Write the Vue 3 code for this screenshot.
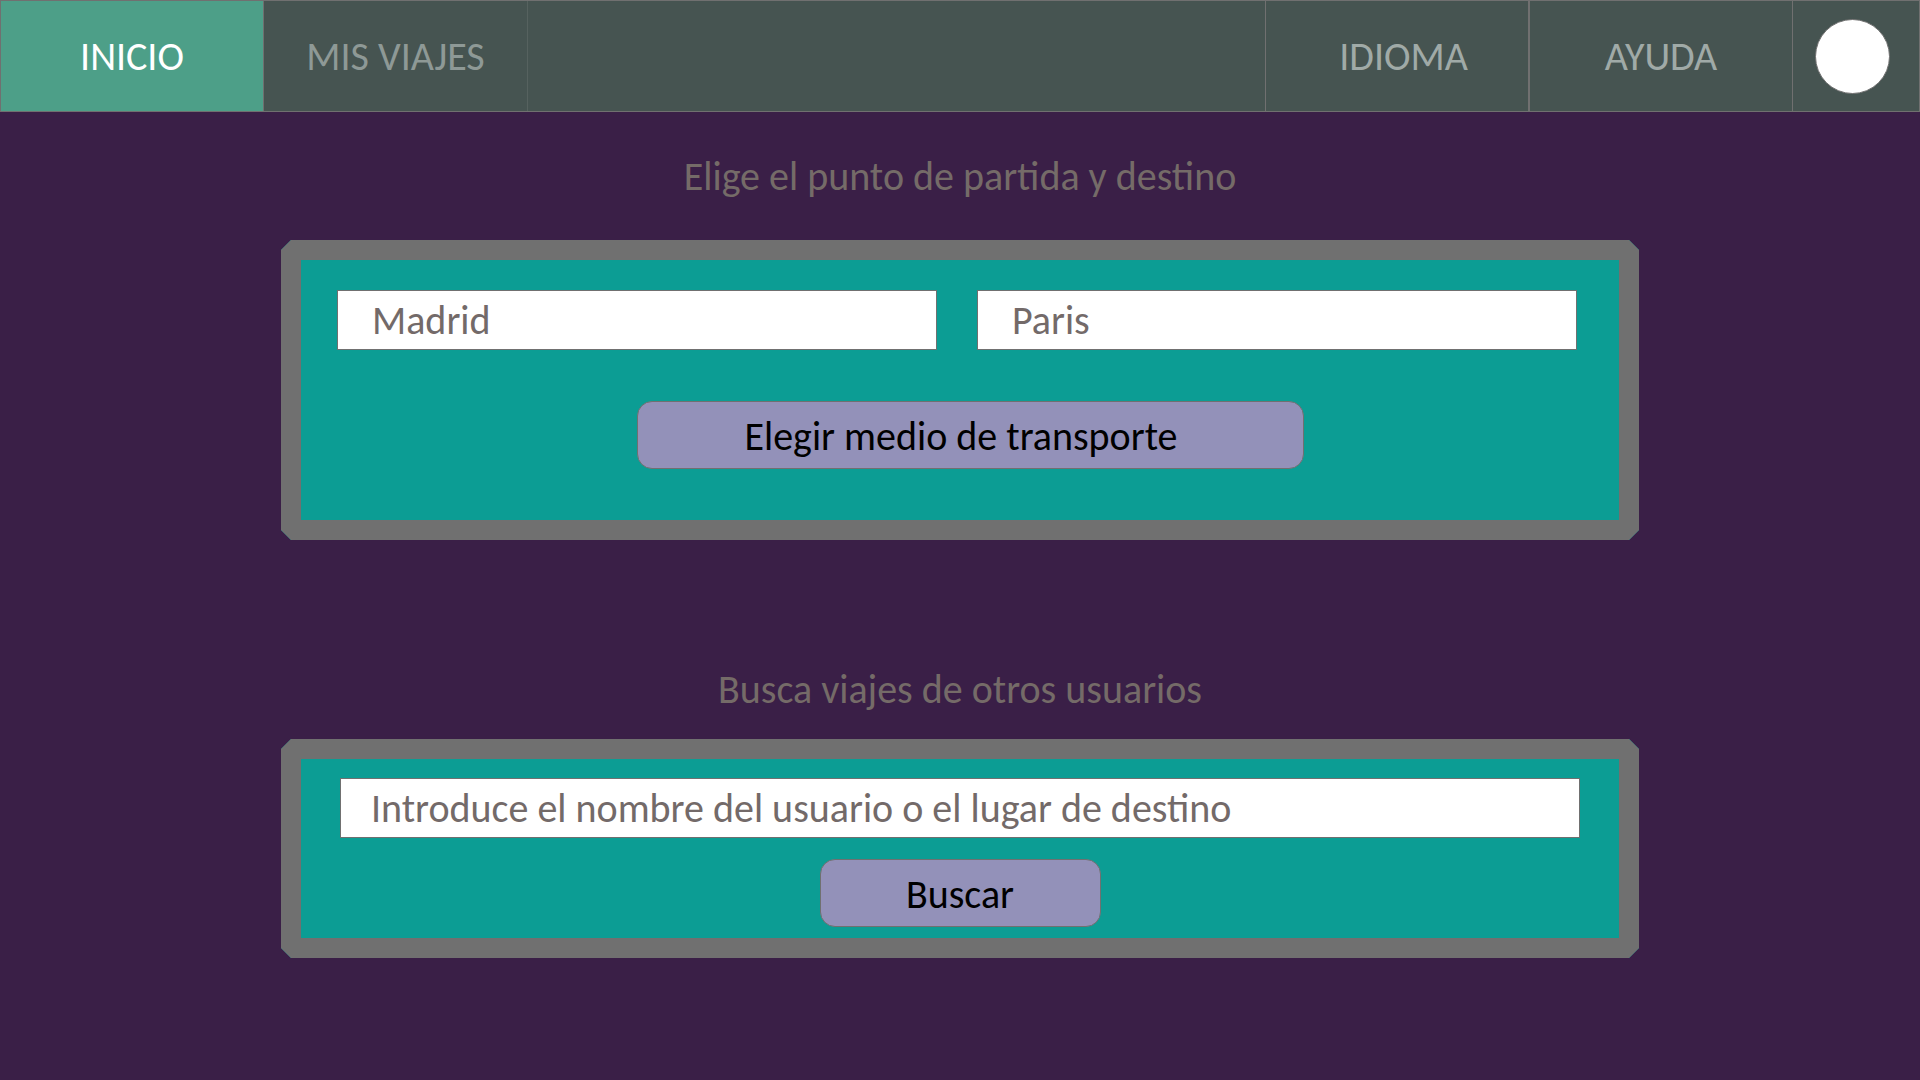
<script setup>
import { ref } from 'vue'

const origin = ref('Madrid')
const destination = ref('Paris')
const query = ref('')
</script>

<template>
  <div class="page">
    <nav class="bar" aria-label="Principal">
      <a class="tab active" href="#inicio" aria-current="page">INICIO</a>
      <a class="tab trips" href="#mis-viajes">MIS VIAJES</a>
      <div class="spacer"></div>
      <a class="tab language" href="#idioma">IDIOMA</a>
      <a class="tab" href="#ayuda">AYUDA</a>
      <div class="account">
        <button class="avatar" type="button" aria-label="Cuenta"></button>
      </div>
    </nav>

    <main>
      <section class="route">
        <h1>Elige el punto de partida y destino</h1>
        <form class="panel" @submit.prevent>
          <div class="fields">
            <input v-model="origin" class="field" type="text" aria-label="Punto de partida" />
            <input v-model="destination" class="field" type="text" aria-label="Destino" />
          </div>
          <button class="action wide" type="submit">Elegir medio de transporte</button>
        </form>
      </section>

      <section class="search">
        <h2>Busca viajes de otros usuarios</h2>
        <form class="panel" @submit.prevent>
          <input
            v-model="query"
            class="field"
            type="search"
            aria-label="Buscar viajes"
            placeholder="Introduce el nombre del usuario o el lugar de destino"
          />
          <button class="action" type="submit">Buscar</button>
        </form>
      </section>
    </main>
  </div>
</template>

<style>
body {
  margin: 0;
  background: #3a1f47;
}
</style>

<style scoped>
.page,
.page * {
  box-sizing: border-box;
}

.page {
  min-height: 100vh;
  background: #3a1f47;
  color: #756b68;
  font-family: Calibri, Carlito, "Open Sans", sans-serif;
  font-size: 40px;
  line-height: 48px;
}

.bar {
  display: flex;
  height: 112px;
  border: 1px solid #707070;
  background: #465451;
}

.tab {
  display: flex;
  flex: 0 1 263px;
  align-items: center;
  justify-content: center;
  padding-top: 2px;
  border-right: 1px solid #707070;
  color: #a0aaa7;
  text-decoration: none;
  white-space: nowrap;
}

.active {
  background: #4d9f88;
  color: #fff;
}

.trips {
  flex-basis: 264px;
  border-right-color: #56625f;
  color: #8e9996;
}

.spacer {
  flex: 1;
  border-right: 1px solid #707070;
}

.language {
  flex-basis: 264px;
  padding-left: 13px;
  border-right-width: 2px;
}

.account {
  display: flex;
  flex: 0 0 126px;
  align-items: center;
  justify-content: center;
  padding: 1px 8px 0 0;
}

.avatar {
  width: 75px;
  height: 75px;
  padding: 0;
  border: 1px solid #707070;
  border-radius: 50%;
  background: #fff;
}

main {
  display: flex;
  flex-direction: column;
  align-items: center;
  padding: 40px 24px;
}

section {
  width: 100%;
  max-width: 1358px;
}

h1,
h2 {
  margin: 0;
  font-size: 40px;
  font-weight: 400;
  line-height: 50px;
  text-align: center;
}

.panel {
  display: flex;
  flex-direction: column;
  align-items: center;
  border: 20px solid #707070;
  background: #0c9d94;
  clip-path: polygon(
    10px 0, calc(100% - 10px) 0, 100% 10px, 100% calc(100% - 10px),
    calc(100% - 10px) 100%, 10px 100%, 0 calc(100% - 10px), 0 10px
  );
}

.route .panel {
  margin-top: 38px;
  padding: 30px 42px 51px 36px;
}

.search {
  margin-top: 125px;
}

.search .panel {
  margin-top: 24px;
  padding: 19px 39px 11px;
}

.fields {
  display: grid;
  grid-template-columns: 1fr 1fr;
  gap: 40px;
  width: 100%;
}

.field {
  width: 100%;
  min-width: 0;
  height: 60px;
  margin: 0;
  padding: 1px 30px 0;
  border: 1px solid #707070;
  border-radius: 0;
  background: #fff;
  color: #736a69;
  font: inherit;
  appearance: none;
}

.fields .field {
  padding-left: 34px;
}

.field::placeholder {
  color: #736a69;
  opacity: 1;
}

.action {
  width: 281px;
  height: 68px;
  margin-top: 21px;
  padding: 4px 0 0;
  border: 1px solid #707070;
  border-radius: 15px;
  background: #9391b9;
  color: #000;
  font: inherit;
  text-align: center;
}

.wide {
  width: 667px;
  margin-top: 51px;
  margin-left: 26px;
  padding-right: 18px;
}
</style>
